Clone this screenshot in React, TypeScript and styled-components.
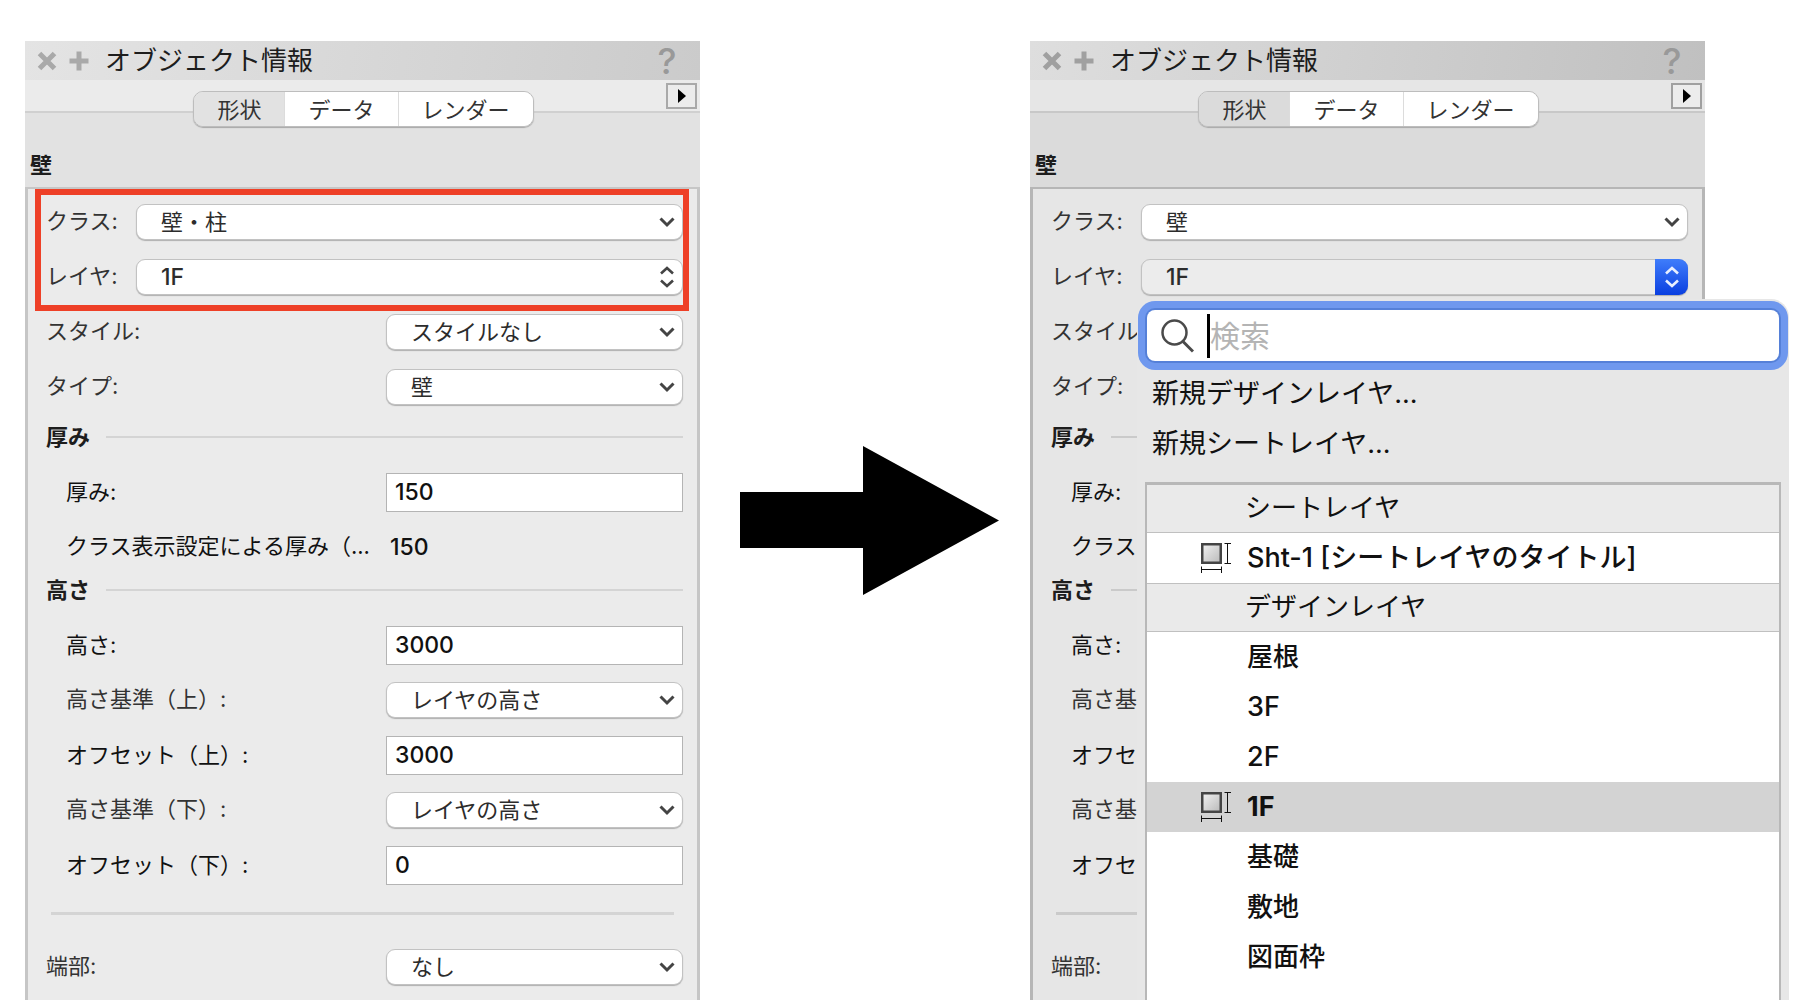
import React from "react";
import styled, { createGlobalStyle, css, ThemeProvider } from "styled-components";

const GlobalStyle = createGlobalStyle`
  *, *::before, *::after { box-sizing: border-box; }
  body {
    margin: 0;
    background: #fff;
    color: #1d1d1d;
    font-family: Inter, "Noto Sans CJK JP", sans-serif;
    font-size: 22px;
    line-height: 32px;
  }
  button, input, select { font: inherit; color: inherit; margin: 0; }
`;

const lightTheme = {
  barFrom: "#e4e4e4",
  barTo: "#cbcbcb",
  strip: "#ebebeb",
  stripLine: "#d0d0d0",
  header: "#e2e2e2",
  body: "#ebebeb",
  edge: "#c6c6c6",
  rule: "#d4d4d4",
  icon: "#a9a9a9",
};

const dimTheme = {
  barFrom: "#dedede",
  barTo: "#c0c0c0",
  strip: "#e6e6e6",
  stripLine: "#c8c8c8",
  header: "#dbdbdb",
  body: "#e6e6e6",
  edge: "#b6b6b6",
  rule: "#cacaca",
  icon: "#a0a0a0",
};

const Stage = styled.main`
  display: grid;
  grid-template-columns: 675fr 330fr 675fr;
  min-height: 100vh;
  padding: 41px 107px 0 25px;
  overflow: hidden;
`;

const ArrowCell = styled.div`
  display: flex;
  align-items: center;
  padding: 0 31px 0 40px;
  svg { display: block; width: 100%; }
`;

const Panel = styled.section`
  position: relative;
  display: flex;
  flex-direction: column;
  min-width: 0;
`;

const TitleBar = styled.header`
  display: flex;
  align-items: center;
  height: 39px;
  padding: 0 21px 0 6px;
  background: linear-gradient(100deg, ${(p) => p.theme.barFrom}, ${(p) => p.theme.barTo});
`;

const BarButton = styled.button`
  display: grid;
  place-items: center;
  width: 32px;
  height: 32px;
  padding: 0;
  border: 0;
  background: none;
  color: ${(p) => p.theme.icon};
`;

const HelpButton = styled(BarButton)`
  width: 24px;
  margin-left: auto;
  color: #999;
  font-size: 36px;
  font-weight: 500;
`;

const Title = styled.h1`
  margin: 0 0 0 10px;
  font-size: 26px;
  font-weight: 400;
`;

const TabStrip = styled.div`
  display: grid;
  grid-template-columns: 1fr auto 1fr;
  align-items: start;
  height: 50px;
  padding: 3px 3px 0 5px;
  background: linear-gradient(
    ${(p) => p.theme.strip} 0 31px,
    ${(p) => p.theme.stripLine} 31px 33px,
    ${(p) => p.theme.header} 33px
  );
`;

const Tabs = styled.div`
  grid-column: 2;
  display: flex;
  margin-top: 8px;
  border: 1px solid #bdbdbd;
  border-radius: 10px;
  overflow: hidden;
  box-shadow: 0 1px 1px #a8a8a8;
`;

const Tab = styled.button<{ $active?: boolean }>`
  height: 34px;
  padding: 2px 23px 0;
  border: 0;
  background: ${(p) => (p.$active ? p.theme.header : "#fff")};
  color: #333;
  & + & { border-left: 1px solid #dcdcdc; }
`;

const FlyoutButton = styled.button`
  display: grid;
  place-items: center;
  justify-self: end;
  width: 31px;
  height: 26px;
  padding: 0;
  border: 2px solid ${(p) => p.theme.icon};
  background: #ececec;
`;

const ObjectType = styled.h2`
  display: flex;
  align-items: center;
  height: 57px;
  margin: 0;
  padding: 12px 5px 0;
  background: ${(p) => p.theme.header};
  font-size: 22px;
  font-weight: 700;
`;

const Body = styled.div`
  flex: 1;
  padding: 6px 14px 5px 13px;
  border: 3px solid ${(p) => p.theme.edge};
  border-width: 2px 3px 0;
  background: ${(p) => p.theme.body};
`;

const Assignment = styled.div<{ $marked?: boolean }>`
  ${(p) => p.$marked && css`outline: 6px solid #ee4027;`}
`;

const Row = styled.div<{ $wide?: boolean; $indent?: boolean; $short?: boolean }>`
  display: grid;
  grid-template-columns: ${(p) => (p.$wide ? "90px 1fr" : "1fr 297px")};
  align-items: center;
  height: ${(p) => (p.$short ? 48 : 55)}px;
  padding-top: ${(p) => (p.$short ? 6 : 0)}px;
  padding-bottom: 1px;
  padding-left: ${(p) => (p.$indent ? 25 : 5)}px;
`;

const Label = styled.label<{ $soft?: boolean }>`
  min-width: 0;
  white-space: nowrap;
  color: ${(p) => (p.$soft ? "#333" : "#111")};
  padding-bottom: ${(p) => (p.$soft ? 3 : 1)}px;
`;

const Output = styled.output`
  padding-left: 4px;
  color: #111;
  font-size: 23px;
  font-weight: 500;
`;

const TextInput = styled.input`
  width: 100%;
  height: 39px;
  padding: 0 8px;
  border: 1px solid #b4b4b4;
  border-radius: 0;
  background: #fff;
  color: #111;
  font-size: 23px;
  font-weight: 500;
  outline: 0;
`;

/* While a menu lies over the fields, only the left strip of the labels stays in view. */
const Fields = styled.div<{ $covered?: boolean }>`
  ${(p) =>
    p.$covered &&
    css`
      width: 94px;
      ${Row} { grid-template-columns: 1fr; }
      hr { margin-right: 0; }
    `}
`;

const SelectBox = styled.div`
  display: grid;
  align-items: center;
  > * { grid-area: 1 / 1; }
`;

const NativeSelect = styled.select<{ $pressed?: boolean; $latin?: boolean }>`
  appearance: none;
  width: 100%;
  height: 36px;
  padding: 0 40px 0 24px;
  border: 1px solid #c2c2c2;
  border-radius: 9px;
  background: ${(p) => (p.$pressed ? "#ececec" : "#fff")};
  box-shadow: 0 1px 1px #b0b0b0;
  color: #2c2c2c;
  font-size: ${(p) => (p.$latin ? 23 : 22)}px;
  font-weight: ${(p) => (p.$latin ? 500 : 400)};
  line-height: 34px;
  outline: 0;
`;

const Indicator = styled.span<{ $active?: boolean }>`
  display: grid;
  place-items: center;
  justify-self: end;
  width: 33px;
  height: 36px;
  border-radius: 0 9px 9px 0;
  pointer-events: none;
  color: ${(p) => (p.$active ? "#e8efff" : "#444")};
  background: ${(p) => (p.$active ? "linear-gradient(#3f7dfb, #0a3fe0)" : "none")};
`;

const SectionTitle = styled.h3`
  display: grid;
  grid-template-columns: 60px 1fr;
  align-items: center;
  height: 50px;
  margin: 0;
  padding: 0 0 6px 5px;
  font-size: 22px;
  font-weight: 700;
  white-space: nowrap;
  &::after {
    content: "";
    height: 2px;
    background: ${(p) => p.theme.rule};
  }
`;

const Divider = styled.hr`
  height: 3px;
  margin: 19px 9px 25px 10px;
  border: 0;
  background: ${(p) => p.theme.rule};
`;

const Popover = styled.div`
  position: absolute;
  top: 258px;
  right: -84px;
  bottom: 0;
  left: 107px;
  display: flex;
  flex-direction: column;
  border-radius: 18px 18px 0 0;
  background: #e7e7e7;
  color: #111;
  font-size: 26px;
`;

const SearchBox = styled.label`
  display: flex;
  align-items: center;
  height: 51px;
  margin: 11px 10px 8px;
  padding: 0 14px;
  border-radius: 8px;
  background: #fff;
  box-shadow: 0 0 0 2px #5580d8, 0 0 0 9px #6f98ee;
`;

const Caret = styled.span`
  width: 3px;
  height: 44px;
  margin-left: 13px;
  background: #000;
`;

const SearchInput = styled.input`
  flex: 1;
  min-width: 0;
  height: 44px;
  padding: 0;
  border: 0;
  outline: 0;
  background: none;
  font-size: 30px;
  &::placeholder { color: #b4b4b4; opacity: 1; }
`;

const Command = styled.button`
  height: 50px;
  padding: 0 15px;
  border: 0;
  background: none;
  font-size: 27px;
  text-align: left;
`;

const LayerList = styled.div`
  flex: 1;
  margin: 13px 8px 0;
  border: 2px solid #b8b8b8;
  border-width: 3px 2px 0;
  background: #fff;
`;

const GroupLabel = styled.div`
  height: 48px;
  padding-left: 98px;
  border-bottom: 1px solid #c0c0c0;
  background: #eaeaea;
  line-height: 46px;
`;

const LayerOption = styled.button<{ $current?: boolean; $ruled?: boolean; $latin?: boolean }>`
  display: grid;
  grid-template-columns: 30px 1fr;
  column-gap: 16px;
  align-items: center;
  width: 100%;
  height: ${(p) => (p.$ruled ? 51 : 50)}px;
  padding: 0 0 0 54px;
  border: 0;
  border-bottom: ${(p) => (p.$ruled ? "1px solid #c0c0c0" : "0")};
  background: ${(p) => (p.$current ? "#d3d3d3" : "none")};
  font-size: ${(p) => (p.$latin ? 27 : 26)}px;
  font-weight: ${(p) => (p.$current ? 700 : 500)};
  text-align: left;
`;

const OptionName = styled.span`
  grid-column: 2;
`;

const Chevron = () => (
  <svg width="16" height="12" viewBox="0 0 16 12" fill="none" stroke="currentColor" strokeWidth="3">
    <path d="M1.5 2.5 8 9l6.500-6.500" />
  </svg>
);

const Stepper = () => (
  <svg width="14" height="22" viewBox="0 0 14 22" fill="none" stroke="currentColor" strokeWidth="2.600">
    <path d="M1 7.500 7 2l6 5.500M1 14.500 7 20l6-5.500" />
  </svg>
);

const LayerIcon = ({ id }: { id: string }) => (
  <svg width="30" height="30" viewBox="0 0 30 30" fill="none">
    <defs>
      <linearGradient id={id} x1="0" y1="0" x2="1" y2="1">
        <stop offset="0" stopColor="#f2f2f2" />
        <stop offset="1" stopColor="#b9b9b9" />
      </linearGradient>
    </defs>
    <rect x="1.250" y="1.250" width="18.500" height="18.500" fill={`url(#${id})`} stroke="#444" strokeWidth="2.500" />
    <path d="M23.500.5h6.500M23.500 20.500h6.500M26.500.5v20" stroke="#111" />
    <path d="M.5 23.500v6.500M20.500 23.500v6.500M.5 26.500h20" stroke="#111" />
  </svg>
);

const startsLatin = (text: string) => /^[A-Za-z0-9]/.test(text);

type SelectProps = { id: string; value: string; stepper?: boolean; open?: boolean };

const Select = ({ id, value, stepper, open }: SelectProps) => (
  <SelectBox>
    <NativeSelect id={id} $pressed={open} $latin={startsLatin(value)} defaultValue={value}>
      <option>{value}</option>
    </NativeSelect>
    <Indicator $active={open}>{stepper ? <Stepper /> : <Chevron />}</Indicator>
  </SelectBox>
);

type Field = {
  kind: "select" | "input" | "output" | "section" | "divider";
  label?: string;
  value?: string;
  indent?: boolean;
};

const fields: Field[] = [
  { kind: "select", label: "スタイル:", value: "スタイルなし" },
  { kind: "select", label: "タイプ:", value: "壁" },
  { kind: "section", label: "厚み" },
  { kind: "input", label: "厚み:", value: "150", indent: true },
  { kind: "output", label: "クラス表示設定による厚み（...", value: "150", indent: true },
  { kind: "section", label: "高さ" },
  { kind: "input", label: "高さ:", value: "3000", indent: true },
  { kind: "select", label: "高さ基準（上）:", value: "レイヤの高さ", indent: true },
  { kind: "input", label: "オフセット（上）:", value: "3000", indent: true },
  { kind: "select", label: "高さ基準（下）:", value: "レイヤの高さ", indent: true },
  { kind: "input", label: "オフセット（下）:", value: "0", indent: true },
  { kind: "divider" },
  { kind: "select", label: "端部:", value: "なし" },
];

const FieldRow = ({ field, id, covered }: { field: Field; id: string; covered?: boolean }) => {
  const { kind, label, value = "", indent } = field;
  if (kind === "section") return <SectionTitle>{label}</SectionTitle>;
  if (kind === "divider") return <Divider />;
  return (
    <Row $indent={indent} $short={kind === "output"}>
      <Label htmlFor={covered ? undefined : id} $soft={kind === "select"}>{label}</Label>
      {!covered && kind === "select" && <Select id={id} value={value} />}
      {!covered && kind === "input" && <TextInput id={id} defaultValue={value} />}
      {!covered && kind === "output" && <Output id={id}>{value}</Output>}
    </Row>
  );
};

/* The part of each label that the open menu leaves in view. */
const visibleLabels: Record<string, string> = {
  "スタイル:": "スタイル",
  "クラス表示設定による厚み（...": "クラス",
  "高さ基準（上）:": "高さ基",
  "オフセット（上）:": "オフセ",
  "高さ基準（下）:": "高さ基",
  "オフセット（下）:": "オフセ",
};

const coveredFields = fields.map((field) => ({
  ...field,
  label: field.label && (visibleLabels[field.label] ?? field.label),
}));

type PanelProps = { name: string; className: string; marked?: boolean; open?: boolean; children?: React.ReactNode };

const ObjectInfoPanel = ({ name, className, marked, open, children }: PanelProps) => (
  <Panel>
    <TitleBar>
      <BarButton aria-label="閉じる">
        <svg width="20" height="20" viewBox="0 0 20 20" stroke="currentColor" strokeWidth="5">
          <path d="M2.500 2.500l15 15M17.500 2.500l-15 15" />
        </svg>
      </BarButton>
      <BarButton aria-label="追加">
        <svg width="20" height="20" viewBox="0 0 20 20" stroke="currentColor" strokeWidth="5">
          <path d="M10 .5v19M.5 10h19" />
        </svg>
      </BarButton>
      <Title>オブジェクト情報</Title>
      <HelpButton>?</HelpButton>
    </TitleBar>
    <TabStrip>
      <Tabs role="tablist">
        <Tab role="tab" $active>形状</Tab>
        <Tab role="tab">データ</Tab>
        <Tab role="tab">レンダー</Tab>
      </Tabs>
      <FlyoutButton aria-label="メニュー">
        <svg width="8" height="14" viewBox="0 0 8 14"><path d="M0 0l8 7-8 7z" /></svg>
      </FlyoutButton>
    </TabStrip>
    <ObjectType>壁</ObjectType>
    <Body>
      <Assignment $marked={marked}>
        <Row $wide>
          <Label htmlFor={`${name}-class`} $soft>クラス:</Label>
          <Select id={`${name}-class`} value={className} />
        </Row>
        <Row $wide>
          <Label htmlFor={`${name}-layer`} $soft>レイヤ:</Label>
          <Select id={`${name}-layer`} value="1F" stepper open={open} />
        </Row>
      </Assignment>
      <Fields $covered={open}>
        {(open ? coveredFields : fields).map((field, i) => (
          <FieldRow key={i} field={field} id={`${name}-${i}`} covered={open} />
        ))}
      </Fields>
    </Body>
    {children}
  </Panel>
);

const designLayers = ["屋根", "3F", "2F", "1F", "基礎", "敷地", "図面枠"];
const currentLayer = "1F";

const LayerMenu = () => (
  <Popover>
    <SearchBox>
      <svg width="33" height="34" viewBox="0 0 33 34" fill="none" stroke="#4a4a4a">
        <circle cx="13.500" cy="13.500" r="12" strokeWidth="2.500" />
        <path d="M22 22.500l10 10" strokeWidth="3" />
      </svg>
      <Caret />
      <SearchInput placeholder="検索" aria-label="検索" />
    </SearchBox>
    <Command>新規デザインレイヤ...</Command>
    <Command>新規シートレイヤ...</Command>
    <LayerList role="listbox">
      <GroupLabel>シートレイヤ</GroupLabel>
      <LayerOption role="option" $ruled $latin>
        <LayerIcon id="sheet-fill" />
        <OptionName>Sht-1 [シートレイヤのタイトル]</OptionName>
      </LayerOption>
      <GroupLabel>デザインレイヤ</GroupLabel>
      {designLayers.map((layer) => (
        <LayerOption
          key={layer}
          role="option"
          $current={layer === currentLayer}
          $latin={startsLatin(layer)}
        >
          {layer === currentLayer && <LayerIcon id="design-fill" />}
          <OptionName>{layer}</OptionName>
        </LayerOption>
      ))}
    </LayerList>
  </Popover>
);

export default function App() {
  return (
    <>
      <GlobalStyle />
      <Stage>
        <ThemeProvider theme={lightTheme}>
          <ObjectInfoPanel name="before" className="壁・柱" marked />
        </ThemeProvider>
        <ArrowCell>
          <svg viewBox="0 0 259 149">
            <path d="M0 46h123V0l136 74.500L123 149v-47H0z" />
          </svg>
        </ArrowCell>
        <ThemeProvider theme={dimTheme}>
          <ObjectInfoPanel name="after" className="壁" open>
            <LayerMenu />
          </ObjectInfoPanel>
        </ThemeProvider>
      </Stage>
    </>
  );
}
